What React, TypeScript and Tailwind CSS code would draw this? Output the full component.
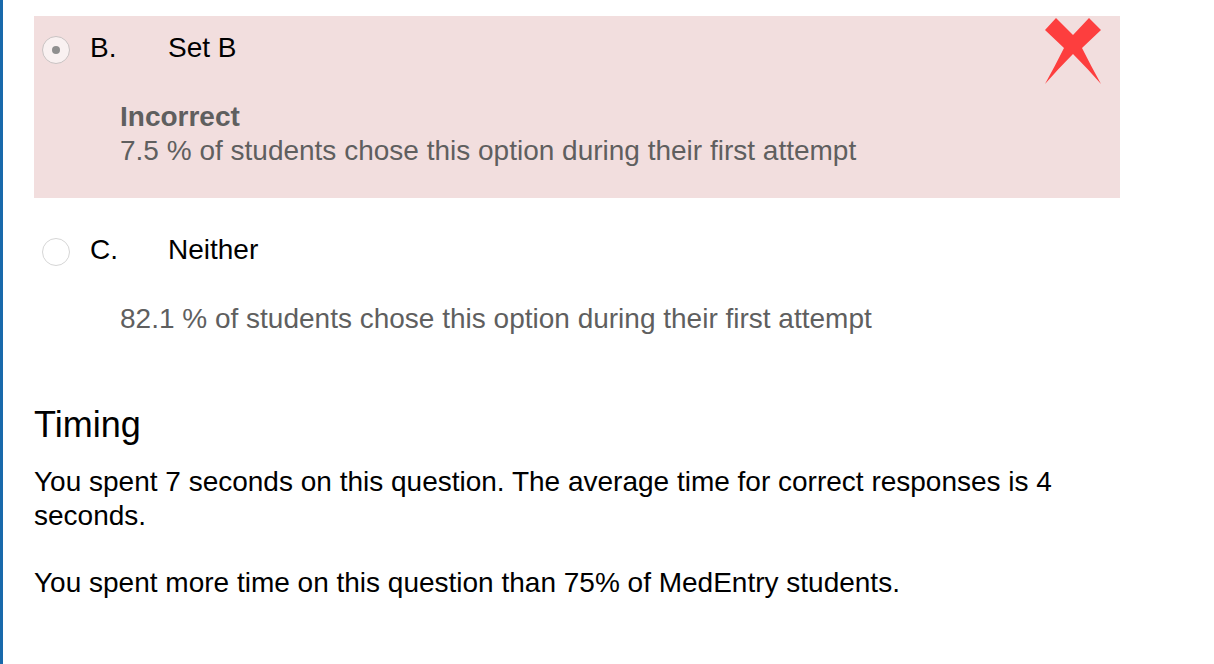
import React from "react";

const Radio = ({ checked }: { checked?: boolean }) => (
    <div
        className={
            "w-[28px] h-[28px] rounded-full border flex items-center justify-center shrink-0 " +
            (checked ? "bg-[#f9f1f1] border-[#c9c3c3]" : "bg-white border-[#d6d6d6]")
        }
    >
        {checked && <div className="w-[8px] h-[8px] rounded-full bg-[#8f8f8f]" />}
    </div>
);

const CrossMark = () => (
    <svg width="56" height="66" viewBox="0 0 56 66" className="absolute right-[19px] top-[2px]">
        <path
            d="M0 12 L11 0 L28 17 L44 0 L56 12 L37 30 Q46 48 56 66 Q42 50 28 36 Q14 50 0 66 Q10 48 19 30 Z"
            fill="#fd3e3e"
        />
    </svg>
);

const OptionRow = ({ letter, label, checked, status, percent }: any) => (
    <div className="flex items-start">
        <div className="h-[34px] flex items-center pl-2 pt-[3px]">
            <Radio checked={checked} />
        </div>
        <div className="pl-5">
            <div className="flex text-black">
                <span className="w-[78px]">{letter}</span>
                <span>{label}</span>
            </div>
            <div className="h-[35px]" />
            <div className="text-[#5f5f5f] ml-[30px]">
                {status && <div className="font-bold">{status}</div>}
                <div>{percent} % of students chose this option during their first attempt</div>
            </div>
        </div>
    </div>
);

const App = () => {
    return (
        <div
            className="min-h-screen bg-white border-l-[3px] border-[#1869ab] text-[28px] leading-[34px]"
            style={{ fontFamily: '"Liberation Sans", Arial, sans-serif' }}
        >
            <div className="ml-[31px] w-[1086px] pt-4">
                <div className="relative bg-[#f2dede] pt-[15px] pb-[30px]">
                    <CrossMark />
                    <OptionRow letter="B." label="Set B" checked status="Incorrect" percent="7.5" />
                </div>
                <div className="pt-[35px]">
                    <OptionRow letter="C." label="Neither" percent="82.1" />
                </div>
                <h2 className="text-[36px] leading-[42px] text-black mt-[68px]">Timing</h2>
                <div className="text-black mt-[19px]">
                    <p>
                        You spent 7 seconds on this question. The average time for correct responses is 4
                        seconds.
                    </p>
                    <p className="mt-[33px]">You spent more time on this question than 75% of MedEntry students.</p>
                </div>
            </div>
        </div>
    );
};

export default App;
